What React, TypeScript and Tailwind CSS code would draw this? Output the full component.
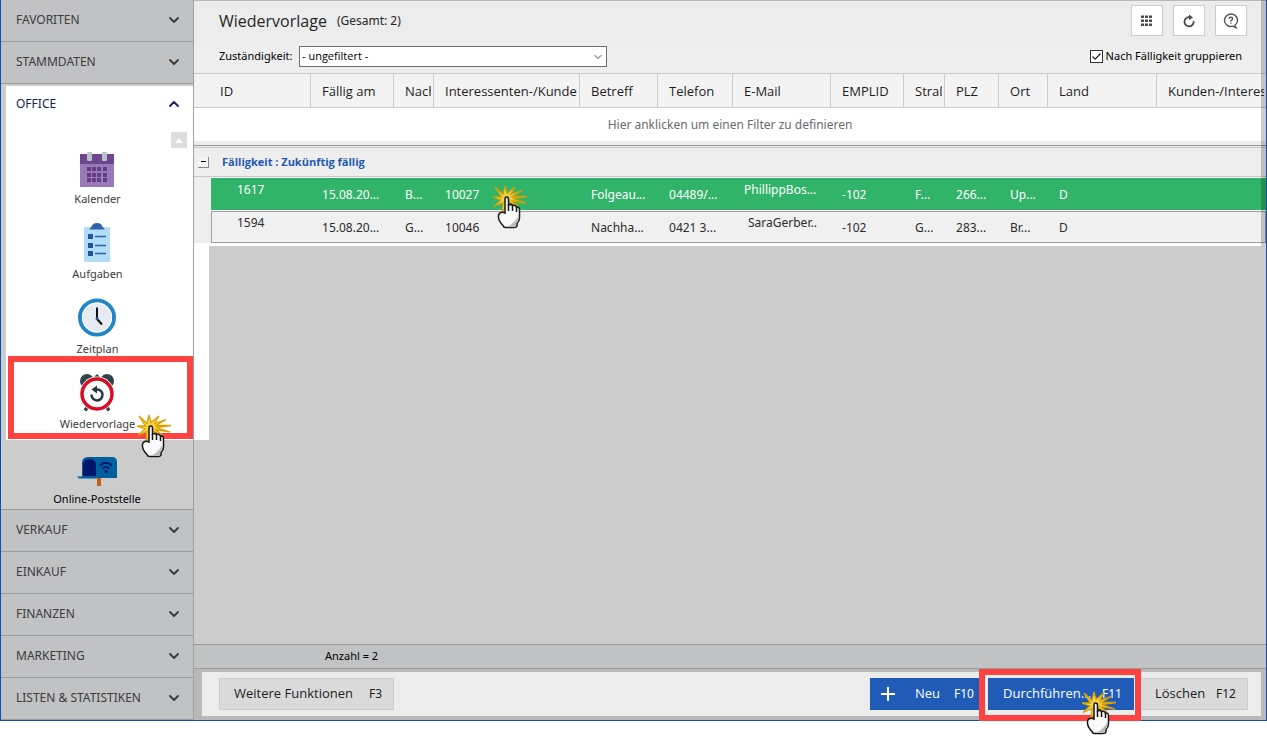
import { type ReactNode, useState } from 'react';

import { clsx } from 'clsx';
import { ChevronDown, ChevronUp } from 'lucide-react';

const SECTIONS_TOP = ['FAVORITEN', 'STAMMDATEN'];
const SECTIONS_BOTTOM = ['VERKAUF', 'EINKAUF', 'FINANZEN', 'MARKETING', 'LISTEN & STATISTIKEN'];

const COLUMNS = [
  { key: 'dueDate', label: 'Fällig am', width: 'w-[83px]' },
  { key: 'lastName', label: 'Nachn', width: 'w-[40px]' },
  { key: 'customer', label: 'Interessenten-/Kunde', width: 'w-[146px]' },
  { key: 'subject', label: 'Betreff', width: 'w-[78px]' },
  { key: 'phone', label: 'Telefon', width: 'w-[75px]' },
  { key: 'email', label: 'E-Mail', width: 'w-[98px]' },
  { key: 'emplId', label: 'EMPLID', width: 'w-[73px]' },
  { key: 'street', label: 'Straß', width: 'w-[41px]' },
  { key: 'zip', label: 'PLZ', width: 'w-[54px]' },
  { key: 'city', label: 'Ort', width: 'w-[49px]' },
  { key: 'country', label: 'Land', width: 'w-[109px]' },
  { key: 'kind', label: 'Kunden-/Interes', width: '' },
] as const;

type Row = { id: string } & Record<(typeof COLUMNS)[number]['key'], string>;

const ROWS: Row[] = [
  {
    id: '1617',
    dueDate: '15.08.20...',
    lastName: 'B...',
    customer: '10027',
    subject: 'Folgeau...',
    phone: '04489/...',
    email: 'PhillippBos...',
    emplId: '-102',
    street: 'F...',
    zip: '266...',
    city: 'Up...',
    country: 'D',
    kind: '',
  },
  {
    id: '1594',
    dueDate: '15.08.20...',
    lastName: 'G...',
    customer: '10046',
    subject: 'Nachha...',
    phone: '0421 3...',
    email: 'SaraGerber..',
    emplId: '-102',
    street: 'G...',
    zip: '283...',
    city: 'Br...',
    country: 'D',
    kind: '',
  },
];

const CalendarIcon = () => (
  <svg width="40" height="40" viewBox="1 0 40 40" aria-hidden="true">
    <rect x="3" y="6" width="34" height="33" fill="#9b78b6" />
    <rect x="3" y="6" width="34" height="10" fill="#6f4591" />
    <rect x="10" y="4" width="5" height="9" rx="1" fill="#b4c3c6" />
    <rect x="25" y="4" width="5" height="9" rx="1" fill="#b4c3c6" />
    {[19, 25, 30].map((y) =>
      [10, 15, 20, 26].map((x) => (
        <rect key={`${x}-${y}`} x={x} y={y} width="4" height="4" fill="#643c87" />
      )),
    )}
  </svg>
);

const ClipboardIcon = () => (
  <svg width="40" height="40" viewBox="1 0 40 40" aria-hidden="true">
    <rect x="7" y="4" width="26" height="35" fill="#b3dcf6" />
    <path d="M12 6.500L15 3Q15.500 0 20 0Q24.500 0 25 3L28 6.500Z" fill="#2f63ab" />
    {[11, 20, 28].map((y) => (
      <g key={y}>
        <rect x="11" y={y} width="5" height="5" fill="#1f54a0" />
        <path d={`M18 ${y + 2.5}H29`} stroke="#2a5da8" strokeWidth="1.500" />
      </g>
    ))}
  </svg>
);

const ClockIcon = () => (
  <svg width="40" height="40" viewBox="1 0 40 40" aria-hidden="true">
    <circle cx="20" cy="19.500" r="17" fill="#e6ebf2" stroke="#1f86c8" strokeWidth="4" />
    <circle cx="20" cy="19.500" r="14.500" fill="none" stroke="#fafcff" strokeWidth="1.200" />
    <path d="M20 9.500V21L25 26.500" fill="none" stroke="#111" strokeWidth="2" />
    <circle cx="20" cy="20.500" r="1.500" fill="#1f5f90" />
  </svg>
);

const AlarmIcon = () => (
  <svg width="40" height="40" viewBox="1 0 40 40" aria-hidden="true">
    <circle cx="10" cy="8" r="7" fill="#2f444b" />
    <circle cx="30" cy="8" r="7" fill="#2f444b" />
    <path d="M17.500 3.500L20 1L22.500 3.500V6H17.500Z" fill="#2f444b" />
    <path d="M11 33L8 37.500M29 33L32 37.500" stroke="#2f444b" strokeWidth="3.500" />
    <circle cx="20" cy="21" r="17.500" fill="#fff" />
    <circle cx="20" cy="21" r="15" fill="#fff" stroke="#d80f24" strokeWidth="3.500" />
    <path d="M14.500 21.500A5.500 5.500 0 1 0 19 16.500" fill="none" stroke="#263a42" strokeWidth="2.500" />
    <path d="M14.500 16.500L20 12.500V20.500Z" fill="#263a42" />
  </svg>
);

const MailboxIcon = () => (
  <svg width="40" height="40" viewBox="0 0 40 40" aria-hidden="true">
    <rect x="20" y="28" width="4" height="10" fill="#c2600b" />
    <path d="M11 9H35Q40 9 40 14V30H5V15Q5 9 11 9Z" fill="#005f9f" />
    <path d="M0 28.500H20V30.500H2Z" fill="#005f9f" />
    <path d="M6 28V17Q6 11 12.500 11Q19 11 19 17V28Z" fill="#00166b" />
    <g fill="none" stroke="#00166b" strokeWidth="1.800">
      <path d="M23 17.500Q29 12 35 17.500" />
      <path d="M25.500 20.500Q29 17.500 32.500 20.500" />
    </g>
    <circle cx="29" cy="23.500" r="1.500" fill="#00166b" />
  </svg>
);

const ClickPointer = ({ className }: { className: string }) => (
  <svg
    width="36"
    height="44"
    viewBox="0 0 36 44"
    aria-hidden="true"
    className={clsx('pointer-events-none absolute z-20', className)}
  >
    <path
      d="M2 2L10 9.500L12 1L14 8.500L22 2L17.500 9.500L29 5.500L19 11.500L34 11.500L19.500 13.500L33 18L18.500 15.500L25 21L16 17L13 22L9 26.500L10 17.500L1 21.500L8 15L0 12L8.500 12Z"
      fill="#f8d54a"
      stroke="#dba200"
      strokeWidth="1.300"
    />
    <path
      d="M12 28V14Q12 12 13.500 12Q15.500 12 15.500 14V20Q18 18.500 19.500 20.500Q22 19.500 23.500 22Q26.500 21.500 26.500 25V33Q26.500 36 24 38.500V41Q23.500 42.500 21 42.500H12.500Q10.500 42.500 10 40.500Q5.500 36 5.500 32Q5 28.500 8 27.500Q10 27 12 28Z"
      fill="#fafafa"
      stroke="#151515"
      strokeWidth="1.500"
    />
    <path d="M15.500 20V26M19.500 20.500V26M23.500 22V27" stroke="#151515" strokeWidth="1.500" />
    <path d="M25.500 30V33Q25 36 23 38V41.500H15Q23 37 25.500 30Z" fill="#b9b9b9" />
  </svg>
);

const GridIcon = () => (
  <svg width="12" height="12" viewBox="0 0 12 12" fill="#4a4a4a" aria-hidden="true">
    {[0, 4, 8].map((y) =>
      [0, 4, 8].map((x) => <rect key={`${x}-${y}`} x={x} y={y + 0.5} width="3" height="2.500" />),
    )}
  </svg>
);

const RefreshIcon = () => (
  <svg width="14" height="14" viewBox="0 0 14 14" fill="none" aria-hidden="true">
    <path d="M7.500 3.200A4.600 4.600 0 1 0 11.600 7" stroke="#4a4a4a" strokeWidth="1.800" />
    <path d="M7 0.500L11 3.500L7 6Z" fill="#4a4a4a" />
  </svg>
);

const HelpIcon = () => (
  <svg width="16" height="16" viewBox="0 0 16 16" fill="none" stroke="#555" aria-hidden="true">
    <path d="M12 12.200A6.500 6.200 0 1 0 10 13.200Q12 14.500 13 14.700Q12 13.500 12 12.200Z" strokeWidth="1.400" />
    <path d="M6 6Q6 4.300 7.800 4.300Q9.600 4.300 9.600 5.800Q9.600 7 7.800 7.600V8.600M7.800 9.500V10.800" strokeWidth="1.400" />
  </svg>
);

const NAV_ITEMS = [
  { label: 'Kalender', icon: <CalendarIcon /> },
  { label: 'Aufgaben', icon: <ClipboardIcon /> },
  { label: 'Zeitplan', icon: <ClockIcon /> },
  { label: 'Wiedervorlage', icon: <AlarmIcon /> },
];

const SectionButton = ({ label }: { label: string }) => (
  <button
    type="button"
    className="flex h-[42px] w-full items-center justify-between border-b border-[#999b9d] bg-[#c0c2c4] pr-[11px] pb-px pl-[15px] text-[#3c3c3c]"
  >
    {label}
    <ChevronDown size={16} strokeWidth={2.8} />
  </button>
);

const NavItem = ({ label, children }: { label: string; children: ReactNode }) => (
  <a href="#" className="flex flex-col items-center gap-0.5 text-[11px] leading-[18px]">
    {children}
    {label}
  </a>
);

const Sidebar = () => (
  <nav className="w-[193px] shrink-0 border-r border-[#a0a0a0] text-xs">
    {SECTIONS_TOP.map((label) => (
      <SectionButton key={label} label={label} />
    ))}

    <div className="border-b border-[#999b9d] bg-[#cccccc] pt-0.5 pb-px">
      <div className="relative ml-[5px] bg-white pb-[7px] text-[#3c3c3c]">
        <button
          type="button"
          className="flex h-9 w-full items-center justify-between pr-[11px] pl-2.5 text-[#14234f]"
        >
          OFFICE
          <ChevronUp size={16} strokeWidth={2.8} />
        </button>
        <div className="flex justify-end pt-2.5 pr-1.5">
          <button
            type="button"
            aria-label="Nach oben"
            className="flex size-4 items-center justify-center bg-[#dddddd]"
          >
            <svg width="8" height="5" viewBox="0 0 8 5" aria-hidden="true">
              <path d="M0 5L4 0L8 5Z" fill="#fff" />
            </svg>
          </button>
        </div>
        <div className="flex flex-col gap-[15px] pr-1">
          {NAV_ITEMS.map((item) => (
            <NavItem key={item.label} label={item.label}>
              {item.icon}
            </NavItem>
          ))}
        </div>
        <div className="absolute right-0 bottom-px left-0.5 h-[83px] border-[6px] border-[#fe4242]" />
        <ClickPointer className="-bottom-[18px] left-[131px]" />
      </div>
      <div className="pt-2 text-black">
        <NavItem label="Online-Poststelle">
          <MailboxIcon />
        </NavItem>
      </div>
    </div>

    {SECTIONS_BOTTOM.map((label) => (
      <SectionButton key={label} label={label} />
    ))}
  </nav>
);

const IconButton = ({ label, children }: { label: string; children: ReactNode }) => (
  <button
    type="button"
    aria-label={label}
    className="flex h-[31px] w-8 items-center justify-center border border-[#cccccc] bg-white"
  >
    {children}
  </button>
);

const ActionButton = ({
  label,
  shortcut,
  className,
  icon,
}: {
  label: string;
  shortcut: string;
  className: string;
  icon?: ReactNode;
}) => (
  <button
    type="button"
    className={clsx('flex h-8 items-center justify-between border text-[13px]', className)}
  >
    {icon}
    <span className="font-['Open_Sans',sans-serif] font-medium">{label}</span>
    <span className="text-xs">{shortcut}</span>
  </button>
);

const DueTable = ({
  selectedId,
  onSelect,
}: {
  selectedId: string;
  onSelect: (id: string) => void;
}) => (
  <table className="w-full table-fixed border-separate border-spacing-0 text-left text-xs text-[#2b2b2b]">
    <colgroup>
      <col className="w-[17px]" />
      <col className="w-[100px]" />
      {COLUMNS.map((column) => (
        <col key={column.key} className={column.width} />
      ))}
    </colgroup>
    <thead>
      <tr className="h-[34px] bg-[#f3f3f3] font-['Open_Sans',sans-serif] text-[13px] text-[#1e1e1e]">
        <th
          colSpan={2}
          className="border-r border-b border-[#cccccc] p-0 pt-0.5 pl-[26px] font-medium"
        >
          ID
        </th>
        {COLUMNS.map((column) => (
          <th
            key={column.key}
            className="border-r border-b border-[#cccccc] p-0 pt-0.5 pr-0.5 pl-[11px] font-medium last:border-r-0"
          >
            <div className="overflow-hidden whitespace-nowrap">{column.label}</div>
          </th>
        ))}
      </tr>
    </thead>
    <tbody>
      <tr>
        <td colSpan={14} className="p-0">
          <div className="flex h-[33px] items-center justify-center bg-white text-[#6b6b6b]">
            Hier anklicken um einen Filter zu definieren
          </div>
          <div className="h-[5px] border-b border-[#999999] bg-[#eeeeee]" />
          <div className="h-0.5 border-b border-[#c8c8c8] bg-[#eeeeee]" />
        </td>
      </tr>
      <tr>
        <td colSpan={14} className="border-b border-[#c8c8c8] bg-[#eeeeee] p-0">
          <div className="flex h-7 items-center gap-[13px] pl-1">
            <button
              type="button"
              aria-label="Gruppe zuklappen"
              className="flex size-[11px] items-center justify-center border-r border-b border-[#8c8c8c] bg-[#f4f4f4]"
            >
              <span className="h-px w-[5px] bg-black" />
            </button>
            <span className="font-['Open_Sans',sans-serif] text-[11px] font-bold text-[#1e5ab5]">
              Fälligkeit : Zukünftig fällig
            </span>
          </div>
        </td>
      </tr>
      {ROWS.map((row) => {
        const isSelected = row.id === selectedId;
        const cellClass = clsx(
          'border-b p-0 align-top leading-4 whitespace-nowrap',
          isSelected
            ? 'border-t border-white bg-[#32b36a] text-white'
            : 'border-t border-[#a0a0a0] bg-[#f0f0f0]',
        );

        return (
          <tr
            key={row.id}
            className={isSelected ? 'h-[34px]' : 'h-8'}
            onClick={() => onSelect(row.id)}
          >
            <td className="bg-[#eeeeee] p-0" />
            <td className={cellClass}>
              <div
                className={
                  isSelected ? 'pt-1 pl-[26px]' : 'border-l border-[#a0a0a0] pt-[3px] pb-[11px] pl-[25px]'
                }
              >
                {row.id}
              </div>
            </td>
            {COLUMNS.map(({ key }) => (
              <td key={key} className={clsx(cellClass, !isSelected && 'last:border-r')}>
                <div
                  className={clsx(
                    key === 'email' && (isSelected ? 'pt-1 pl-[11px]' : 'pt-[3px] pl-[15px]'),
                    key !== 'email' && (isSelected ? 'pt-[9px] pl-[11px]' : 'pt-2 pl-[11px]'),
                  )}
                >
                  {key === 'customer' && isSelected ? (
                    <span className="relative">
                      {row[key]}
                      <ClickPointer className="-top-px left-12 opacity-95" />
                    </span>
                  ) : (
                    row[key]
                  )}
                </div>
              </td>
            ))}
          </tr>
        );
      })}
    </tbody>
  </table>
);

export default function App() {
  const [selectedId, setSelectedId] = useState('1617');
  const [isGrouped, setIsGrouped] = useState(true);

  return (
    <div className="bg-white pb-[15px] font-['Noto_Sans',sans-serif]">
      <div className="flex border-x border-b border-[#0a50a5] bg-[#cccccc]">
        <Sidebar />

        <main className="flex min-w-0 flex-1 flex-col">
          <div className="relative">
            <header className="flex h-[42px] items-center border-t border-[#b9b9b9] bg-[#ececec] pr-[19px] pb-0.5 pl-[25px] text-[#262626]">
              <h1 className="font-['Open_Sans',sans-serif] text-base font-medium">Wiedervorlage</h1>
              <span className="ml-2.5 text-xs">(Gesamt: 2)</span>
              <div className="ml-auto flex gap-2.5">
                <IconButton label="Ansicht">
                  <GridIcon />
                </IconButton>
                <IconButton label="Aktualisieren">
                  <RefreshIcon />
                </IconButton>
                <IconButton label="Hilfe">
                  <HelpIcon />
                </IconButton>
              </div>
            </header>

            <div className="flex h-8 items-center border-b border-[#cccccc] bg-[#eeeeee] pr-6 pb-0.5 pl-[25px] text-[11px] text-black">
              <label htmlFor="responsibility" className="w-20">
                Zuständigkeit:
              </label>
              <div className="relative">
                <select
                  id="responsibility"
                  className="block h-[21px] w-[308px] appearance-none border border-[#6e6e6e] bg-white pl-0.5 font-['Open_Sans',sans-serif]"
                >
                  <option>- ungefiltert -</option>
                </select>
                <ChevronDown
                  size={12}
                  strokeWidth={2}
                  className="pointer-events-none absolute top-[5px] right-[3px] text-[#444]"
                />
              </div>
              <label className="ml-auto flex items-center gap-[3px]">
                <span className="relative flex">
                  <input
                    type="checkbox"
                    checked={isGrouped}
                    onChange={() => setIsGrouped(!isGrouped)}
                    className="size-[13px] appearance-none border border-[#333] bg-white"
                  />
                  {isGrouped && (
                    <svg
                      width="13"
                      height="13"
                      viewBox="0 0 13 13"
                      aria-hidden="true"
                      className="pointer-events-none absolute inset-0"
                    >
                      <path d="M2.500 6.500L5.200 9.200L10.500 3.500" fill="none" stroke="#222" strokeWidth="1.200" />
                    </svg>
                  )}
                </span>
                Nach Fälligkeit gruppieren
              </label>
            </div>

            <DueTable selectedId={selectedId} onSelect={setSelectedId} />
            <div className="h-[3px] bg-white" />
            <div className="pointer-events-none absolute inset-y-0 right-0 w-[5px] bg-black/20" />
          </div>

          <div className="flex flex-1">
            <div className="h-[194px] w-[15px] bg-white" />
          </div>

          <div className="flex h-[25px] items-center border-y border-[#999b9d] bg-[#c0c2c4] pl-[131px] text-[11px] text-black">
            Anzahl = 2
          </div>

          <footer className="bg-[#b9b9b9] pt-[3px] pr-[5px] pb-1 pl-2">
            <div className="flex items-center gap-1.5 bg-[#ececec] py-1.5 pr-[13px] pl-[17px]">
              <ActionButton
                label="Weitere Funktionen"
                shortcut="F3"
                className="mr-auto w-[175px] border-[#cccccc] bg-[#dadada] pr-[11px] pl-3.5 text-[#1e1e1e]"
              />
              <ActionButton
                label="Neu"
                shortcut="F10"
                className="w-28 gap-3.5 border-[#205bb8] bg-[#205bb8] pr-[7px] pl-2.5 text-white"
                icon={
                  <svg width="14" height="14" viewBox="0 0 14 14" aria-hidden="true" className="mr-auto">
                    <path d="M7 0V14M0 7H14" stroke="#fff" strokeWidth="2" />
                  </svg>
                }
              />
              <div className="relative">
                <ActionButton
                  label="Durchführen..."
                  shortcut="F11"
                  className="w-[146px] border-[#205bb8] bg-[#205bb8] pr-[11px] pl-3.5 text-white"
                />
                <div className="pointer-events-none absolute -top-[9px] -right-[7px] -bottom-[11px] -left-[9px] z-10 border-[6px] border-[#fe4242]" />
                <ClickPointer className="top-[13px] left-[94px]" />
              </div>
              <ActionButton
                label="Löschen"
                shortcut="F12"
                className="w-[108px] border-[#cccccc] bg-[#dadada] pr-[11px] pl-3.5 text-[#1e1e1e]"
              />
            </div>
          </footer>
        </main>
      </div>
    </div>
  );
}
